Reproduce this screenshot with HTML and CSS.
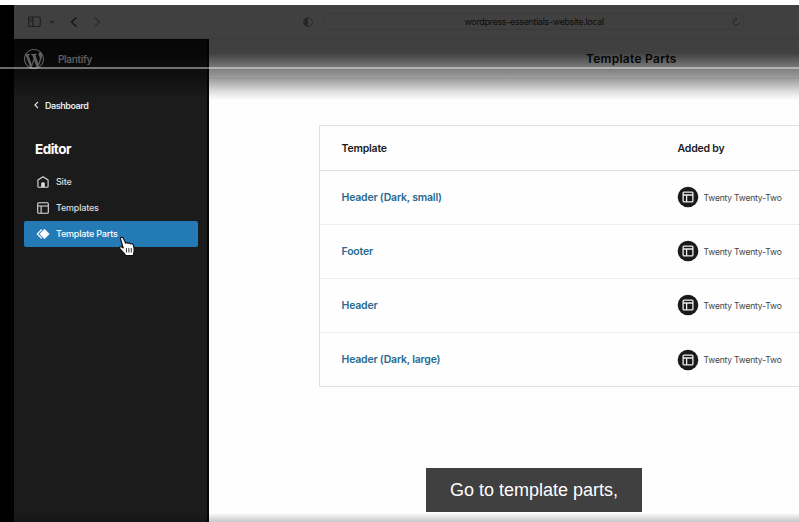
FILE: index.html
```html
<!DOCTYPE html>
<html lang="en">
<head>
<meta charset="utf-8">
<title>Template Parts</title>
<link rel="stylesheet" href="styles.css">
</head>
<body>
<svg class="defs" width="0" height="0">
  <symbol id="layout" viewBox="0 0 12 12"><path d="M1.700.7h8.600q1 0 1 1v8.600q0 1-1 1H1.700q-1 0-1-1V1.700q0-1 1-1zM.7 4h10.600M4.100 4v7.300" fill="none" stroke="currentColor" stroke-width="1.100"/></symbol>
  <symbol id="badge" viewBox="0 0 22 22"><circle cx="11" cy="11" r="10.300" fill="#1a1a1a"/><rect x="6.100" y="6.100" width="9.800" height="9.800" rx="1" fill="none" stroke="#eee" stroke-width="1.300"/><path d="M6 9h10M9.600 9v7" fill="none" stroke="#eee" stroke-width="1.300"/></symbol>
</svg>
<div class="player">
  <header class="toolbar">
    <svg class="nav-icons" width="80" height="16" viewBox="0 0 80 16" fill="none" stroke="#777" stroke-width="1.200"><rect x=".6" y="3" width="11.600" height="9.500" rx="1"/><path d="M4.800 3v9.500M2 5.300h1.400M2 7.300h1.400"/><path d="m22.500 7 1.800 1.700L26.100 7"/><path d="m48.500 3.500-5 4.500 5 4.500" stroke="#555" stroke-width="1.500"/><path d="m66.500 3.500 5 4.500-5 4.500" stroke="#aaa"/></svg>
    <svg class="shield" width="10" height="12" viewBox="0 0 10 12"><circle cx="5" cy="6" r="4.400" fill="none" stroke="#aaa"/><path d="M5 1.500a4.500 4.500 0 0 0 0 9z" fill="#999"/></svg>
    <div class="address"><span>wordpress-essentials-website.local</span><svg class="reload" width="9" height="10" viewBox="0 0 9 10" fill="none" stroke="#999"><path d="M7.500 5.300A3.200 3.200 0 1 1 4.500 2M3.500.6 5 2 3.600 3.500"/></svg></div>
  </header>
  <div class="app">
    <aside class="sidebar">
      <div class="brand">
        <svg width="20" height="20" viewBox="0 0 20 20" fill="#606060"><path d="M20 10c0-5.510-4.490-10-10-10C4.480 0 0 4.490 0 10c0 5.520 4.480 10 10 10 5.510 0 10-4.480 10-10zM7.780 15.370L4.370 6.220c.55-.02 1.170-.08 1.170-.08.5-.06.44-1.130-.06-1.110 0 0-1.450.11-2.370.11-.18 0-.37 0-.58-.01C4.120 2.690 6.870 1.110 10 1.110c2.330 0 4.450.87 6.050 2.340-.68-.11-1.650.39-1.650 1.580 0 .74.45 1.360.9 2.100.35.61.55 1.360.55 2.460 0 1.490-1.400 5-1.400 5l-3.030-8.370c.54-.02.82-.17.82-.17.5-.05.44-1.250-.06-1.220 0 0-1.440.12-2.380.12-.87 0-2.330-.12-2.330-.12-.5-.03-.56 1.200-.06 1.220l.92.08 1.260 3.410zM17.410 10c.24-.64.74-1.870.43-4.250.7 1.290 1.050 2.710 1.050 4.250 0 3.290-1.730 6.240-4.400 7.780.97-2.590 1.940-5.200 2.920-7.780zM6.100 18.090C3.120 16.650 1.110 13.530 1.110 10c0-1.300.23-2.480.72-3.590C3.250 10.300 4.670 14.200 6.100 18.090zm4.030-6.630l2.580 6.980c-.86.29-1.760.45-2.710.45-.79 0-1.570-.11-2.290-.33.81-2.380 1.620-4.740 2.420-7.100z"/></svg>
        <span class="site">Plantify</span>
      </div>
      <a class="back"><svg width="5" height="8" viewBox="0 0 5 8"><path d="M4 .8 1 4l3 3.200" fill="none" stroke="currentColor" stroke-width="1.200"/></svg><span>Dashboard</span></a>
      <h1><span>Editor</span></h1>
      <nav>
        <a><svg width="12" height="12" viewBox="0 0 12 12"><path d="M.9 4 6 .8 11.100 4v6.200q0 1-1 1H1.900q-1 0-1-1z" fill="none" stroke="currentColor" stroke-width="1.100" stroke-linejoin="round"/><path d="M4.200 11V7.500q0-1.300 1.800-1.300t1.800 1.300V11z" fill="currentColor"/></svg><span>Site</span></a>
        <a><svg width="12" height="12"><use href="#layout"/></svg><span>Templates</span></a>
        <a class="active"><svg width="14" height="12" viewBox="0 0 14 12"><path d="M8.500 1.200 13.200 6l-4.700 4.800L3.800 6z" fill="#fff" stroke="#fff" stroke-width=".8" stroke-linejoin="round"/><path d="M5.700 1.500 1.200 6l4.500 4.500" fill="none" stroke="#fff" stroke-width="1.100"/></svg><span>Template Parts</span></a>
      </nav>
    </aside>
    <main>
      <div class="title"><h2><span>Template Parts</span></h2></div>
      <div class="table">
        <div class="row head"><b>Template</b><b>Added by</b></div>
        <div class="row"><a>Header (Dark, small)</a><div class="by"><svg width="22" height="22"><use href="#badge"/></svg><span>Twenty Twenty-Two</span></div></div>
        <div class="row"><a>Footer</a><div class="by"><svg width="22" height="22"><use href="#badge"/></svg><span>Twenty Twenty-Two</span></div></div>
        <div class="row"><a>Header</a><div class="by"><svg width="22" height="22"><use href="#badge"/></svg><span>Twenty Twenty-Two</span></div></div>
        <div class="row"><a>Header (Dark, large)</a><div class="by"><svg width="22" height="22"><use href="#badge"/></svg><span>Twenty Twenty-Two</span></div></div>
      </div>
    </main>
  </div>
  <div class="shade-top"></div>
  <div class="progress"></div>
  <div class="shade-bottom"></div>
  <svg class="cursor" width="19" height="21" viewBox="0 0 18 20"><path d="M2.200 2.100C3.300.6 4.800 1.200 5.300 2.600l1.800 4.200c.8-.8 1.900-.7 2.500.2.900-.6 2-.3 2.500.6 1.200-.5 2.300.1 2.600 1.400.5 2.100 1 4.300.4 6.400l-.6 3.300H7.200C6.600 16.300 3.500 14.600 1.700 12c-.9-1.400.5-2.500 1.800-1.600l1.400 1z" fill="#fff" stroke="#111" stroke-width="1.100" stroke-linejoin="round"/><path d="M8 11.500v4.200M10.300 11.500v4.200M12.600 11.500v4.200" stroke="#222" stroke-width=".9"/></svg>
  <div class="caption"><span>Go to template parts,</span></div>
</div>
</body>
</html>
```

FILE: styles.css
```css
* { box-sizing: border-box; }
body { margin: 0; padding-top: 5px; background: #fff; font-family: Inter, "Liberation Sans", sans-serif; overflow: hidden; }
svg { display: block; flex: none; }
.defs { position: absolute; }
h1, h2 { margin: 0; }
span, b, .row > a { white-space: nowrap; }
.player { position: relative; height: 517px; padding-left: 14px; background: #000; overflow: hidden; display: flex; flex-direction: column; }
.toolbar { height: 34px; flex: none; background: #fff; border-bottom: 1px solid #e8e8e8; display: flex; align-items: center; padding-left: 14px; }
.shield { margin-left: 195px; }
.address { margin-left: 11px; width: 420px; height: 17px; border: 1px solid #e8e8e8; border-radius: 5px; display: flex; align-items: center; justify-content: space-between; font-size: 9px; letter-spacing: -.35px; color: #333; padding: 0 2px 0 139.5px; }
.address .reload { margin-top: 1px; }
.app { flex: 1; display: flex; min-height: 0; }
.sidebar { width: 195px; flex: none; background: #1b1b1b; border-right: 2px solid #050505; color: #ddd; }
.brand { position: relative; z-index: 1; display: flex; align-items: center; height: 40px; padding-left: 10px; gap: 14px; }
.site { font-size: 10px; letter-spacing: -.35px; font-weight: 600; color: #5c5c5c; padding-bottom: 1px; }
.back { display: flex; align-items: center; gap: 6px; margin: 16px 0 0 20px; height: 20px; font-size: 9px; letter-spacing: -.45px; font-weight: 600; color: #e8e8e8; }
h1 { margin: 24px 0 0 21px; height: 20px; line-height: 20px; font-size: 13.5px; letter-spacing: -.5px; font-weight: 700; color: #fff; }
nav { margin: 10px 9px 0 10px; }
nav a { display: flex; align-items: center; height: 26px; padding-left: 13px; gap: 7px; font-size: 9px; letter-spacing: -.2px; font-weight: 500; color: #ddd; }
nav span { padding-bottom: 1px; }
nav .active { background: #237ab5; color: #fff; border-radius: 2px; padding-left: 12px; gap: 6px; }
main { flex: 1; min-width: 0; background: #fefefe; overflow: hidden; }
.title { height: 40px; border-bottom: 1px solid #eee; }
h2 { margin-left: 377px; line-height: 40px; font-size: 12px; letter-spacing: .27px; font-weight: 600; color: #111; }
.table { width: 560px; height: 262px; margin: 46px 0 0 110px; border: 1px solid #e0e0e0; }
.row { display: flex; align-items: center; height: 54px; padding: 0 0 1px 21.5px; border-bottom: 1px solid #eee; }
.row:last-child { border: 0; }
.row > :first-child { width: 336px; }
.head { height: 45px; padding-bottom: 0; font-size: 10.5px; letter-spacing: -.2px; border-color: #ddd; }
.head b { font-weight: 600; color: #1a1a1a; }
.row > a { font-size: 10.5px; letter-spacing: -.2px; font-weight: 600; color: #28698f; }
.by { display: flex; align-items: center; gap: 5px; margin-left: -1px; font-size: 8.5px; letter-spacing: -.18px; color: #444; }
.by span { padding-top: 1px; }
.shade-top { position: absolute; inset: 0 0 auto 0; height: 95px; background: linear-gradient(rgba(0,0,0,.75) 0, rgba(0,0,0,.75) 48px, rgba(0,0,0,.5) 64px, rgba(0,0,0,.34) 76px, rgba(0,0,0,.12) 87px, transparent 95px); }
.progress { position: absolute; z-index: 2; top: 62px; left: 0; right: 0; height: 2px; background: rgba(255,255,255,.42); }
.shade-bottom { position: absolute; inset: auto 0 0 0; height: 9px; background: linear-gradient(transparent, rgba(0,0,0,.22)); }
.cursor { position: absolute; left: 118px; top: 231px; }
.caption { position: absolute; left: 426px; top: 463px; width: 216px; height: 44px; padding-left: 24px; line-height: 44px; background: #404040; color: #fff; font-family: "Liberation Sans", Arial, sans-serif; font-size: 18px; }
```
